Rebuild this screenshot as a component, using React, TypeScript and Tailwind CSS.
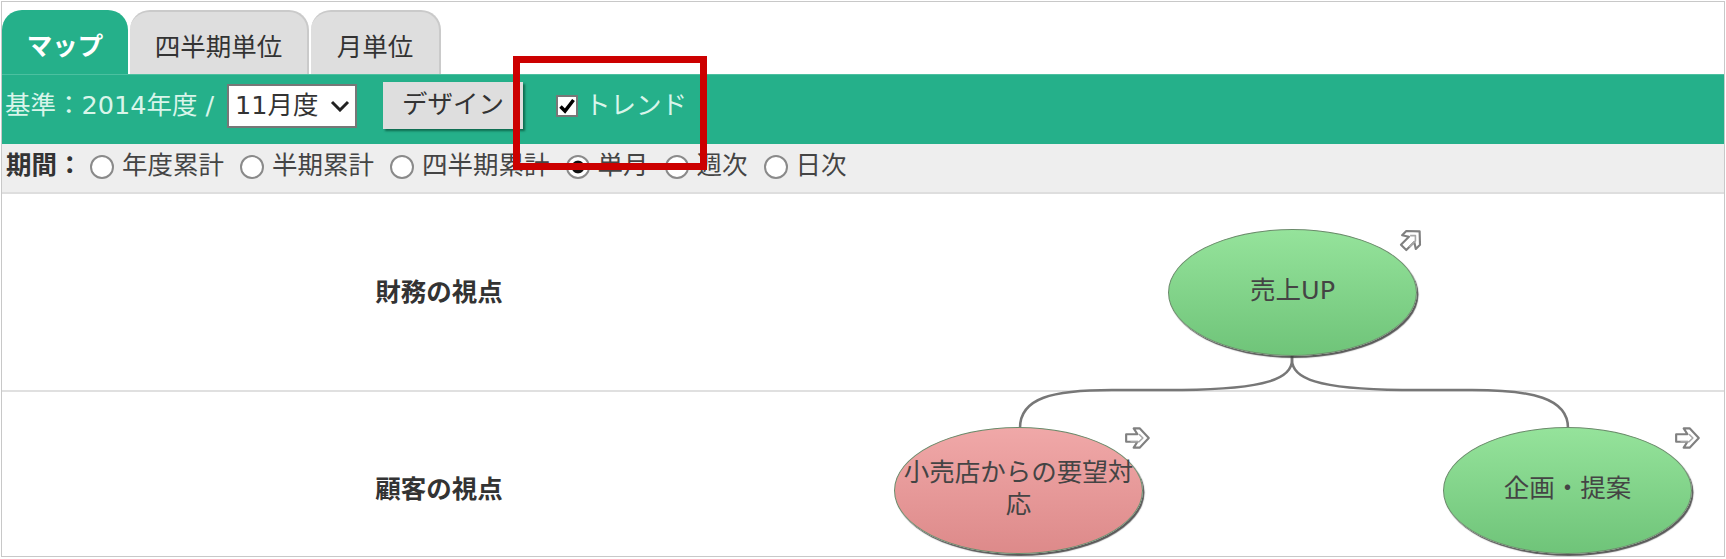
const font = { fontFamily: '"DejaVu Sans", "Noto Sans CJK JP", "Noto Sans", sans-serif' };

function Arrow({ className = "" }: { className?: string }) {
  return (
    <svg viewBox="0 0 26 24" className={`absolute w-[28px] h-[26px] ${className}`} fill="none" stroke="#808080" strokeWidth="2" strokeLinejoin="round">
      <path d="M2 8.500h10.500L9 3h5.500L23 12l-8.500 9H9l3.500-5.500H2z" />
      <path d="M14 8.500L17.500 12 14 15.500H6" stroke="#a8a8a8" strokeWidth="1.500" />
    </svg>
  );
}

function Node({ className, color, children }: { className: string; color: string; children: React.ReactNode }) {
  return (
    <div
      className={`absolute w-[249px] h-[127px] rounded-[50%] border border-[#6a8a6a] shadow-[1.500px_2px_1px_rgba(60,60,60,0.85)] flex items-center justify-center text-center text-[25.500px] leading-[32px] text-[#444] ${color} ${className}`}
    >
      <div className="pb-[5px]">{children}</div>
    </div>
  );
}

function Radio({ label, checked = false }: { label: string; checked?: boolean }) {
  return (
    <label className="flex items-center gap-[8px]">
      <input
        type="radio"
        name="period"
        defaultChecked={checked}
        className={`appearance-none w-[24px] h-[24px] rounded-full border-2 border-[#8a8a8a] mt-[4px] ${checked ? "bg-[radial-gradient(circle,#111_0,#111_42%,#fff_48%)]" : "bg-white"}`}
      />
      <span>{label}</span>
    </label>
  );
}

export default function App() {
  return (
    <div style={font} className="relative w-[1726px] h-[559px] bg-white p-[1px] pb-[2px] overflow-hidden">
      <div className="relative h-full border border-[#c8c8c8] overflow-hidden text-[25.500px] text-[#444]">
        <div className="flex items-end gap-[2px] h-[72px]">
          <div className="w-[126px] h-[64px] rounded-t-[20px] bg-[#25b08a] text-white font-bold flex items-center justify-center pt-[8px]">マップ</div>
          <div className="w-[179px] h-[64px] rounded-t-[20px] bg-[#dedede] border-t-2 border-r-2 border-[#cacaca] flex items-center justify-center pt-[8px] text-[#333]">四半期単位</div>
          <div className="w-[130px] h-[64px] rounded-t-[20px] bg-[#dedede] border-t-2 border-r-2 border-[#cacaca] flex items-center justify-center pt-[8px] text-[#333]">月単位</div>
        </div>

        <div className="h-[70px] bg-[#25b08a] border-t border-[#4cc0a0] flex items-center pl-[3px] pb-[8px] text-[#d9f5ea]">
          <span className="w-[222px] whitespace-nowrap pb-[1px]">基準：2014年度 /</span>
          <div className="w-[130px] h-[44px] bg-white border-2 border-[#777] flex items-center justify-between pl-[6px] pr-[5px] text-[#333]">
            <span>11月度</span>
            <svg viewBox="0 0 20 12" className="w-[20px] h-[12px]" fill="none" stroke="#222" strokeWidth="3">
              <path d="M2 2l8 8 8-8" />
            </svg>
          </div>
          <button className="ml-[26px] w-[140px] h-[47px] bg-[#dedede] text-[#333] pb-[2px] shadow-[2px_2px_2px_rgba(0,60,40,0.6)]">デザイン</button>
          <span className="relative ml-[33px] w-[22px] h-[22px] bg-white border-2 border-[#777] flex items-center justify-center">
            <input type="checkbox" defaultChecked className="absolute inset-0 opacity-0" />
            <svg viewBox="0 0 18 18" className="w-[18px] h-[18px]" fill="none" stroke="#000" strokeWidth="3.500">
              <path d="M2.500 9.500l4.500 4.500 8.500-11" />
            </svg>
          </span>
          <span className="ml-[7px] pb-[1px]">トレンド</span>
        </div>

        <div className="h-[50px] bg-[#eeeeee] border-b-2 border-[#dedede] flex items-center pl-[4px] pb-[6px]">
          <span className="font-bold w-[84px] text-[#333]">期間：</span>
          <div className="flex items-center gap-[16px]">
            <Radio label="年度累計" />
            <Radio label="半期累計" />
            <Radio label="四半期累計" />
            <Radio label="単月" checked />
            <Radio label="週次" />
            <Radio label="日次" />
          </div>
        </div>

        <div className="relative">
          <div className="h-[198px] border-b-2 border-[#e0e0e0] flex items-center">
            <div className="w-[874px] text-center font-bold text-[#333]">財務の視点</div>
          </div>
          <div className="h-[194px] flex items-center">
            <div className="w-[874px] text-center font-bold text-[#333]">顧客の視点</div>
          </div>

          <svg className="absolute left-0 top-0 w-[1722px] h-[240px]" viewBox="0 0 1722 240" fill="none" stroke="#777" strokeWidth="2.500">
            <path d="M1290 162v4c0 18-24 29-110 30h-70c-60 0-92 8-92 38" />
            <path d="M1290 162v4c0 18 24 29 110 30h70c60 0 96 8 96 38" />
          </svg>

          <Node className="left-[1166px] top-[35px]" color="bg-linear-to-b from-[#95e39b] to-[#6fc479]">売上UP</Node>
          <Node className="left-[892px] top-[233px]" color="bg-linear-to-b from-[#f0a8a8] to-[#dd8a8a]">
            <span className="block w-[240px]">小売店からの要望対応</span>
          </Node>
          <Node className="left-[1441px] top-[233px]" color="bg-linear-to-b from-[#95e39b] to-[#6fc479]">企画・提案</Node>

          <Arrow className="left-[1396px] top-[32px] -rotate-45" />
          <Arrow className="left-[1122px] top-[231px]" />
          <Arrow className="left-[1672px] top-[231px]" />
        </div>
      </div>

      <div className="absolute left-[513px] top-[56px] w-[194px] h-[114px] border-[7px] border-[#cc0000]" />
    </div>
  );
}
